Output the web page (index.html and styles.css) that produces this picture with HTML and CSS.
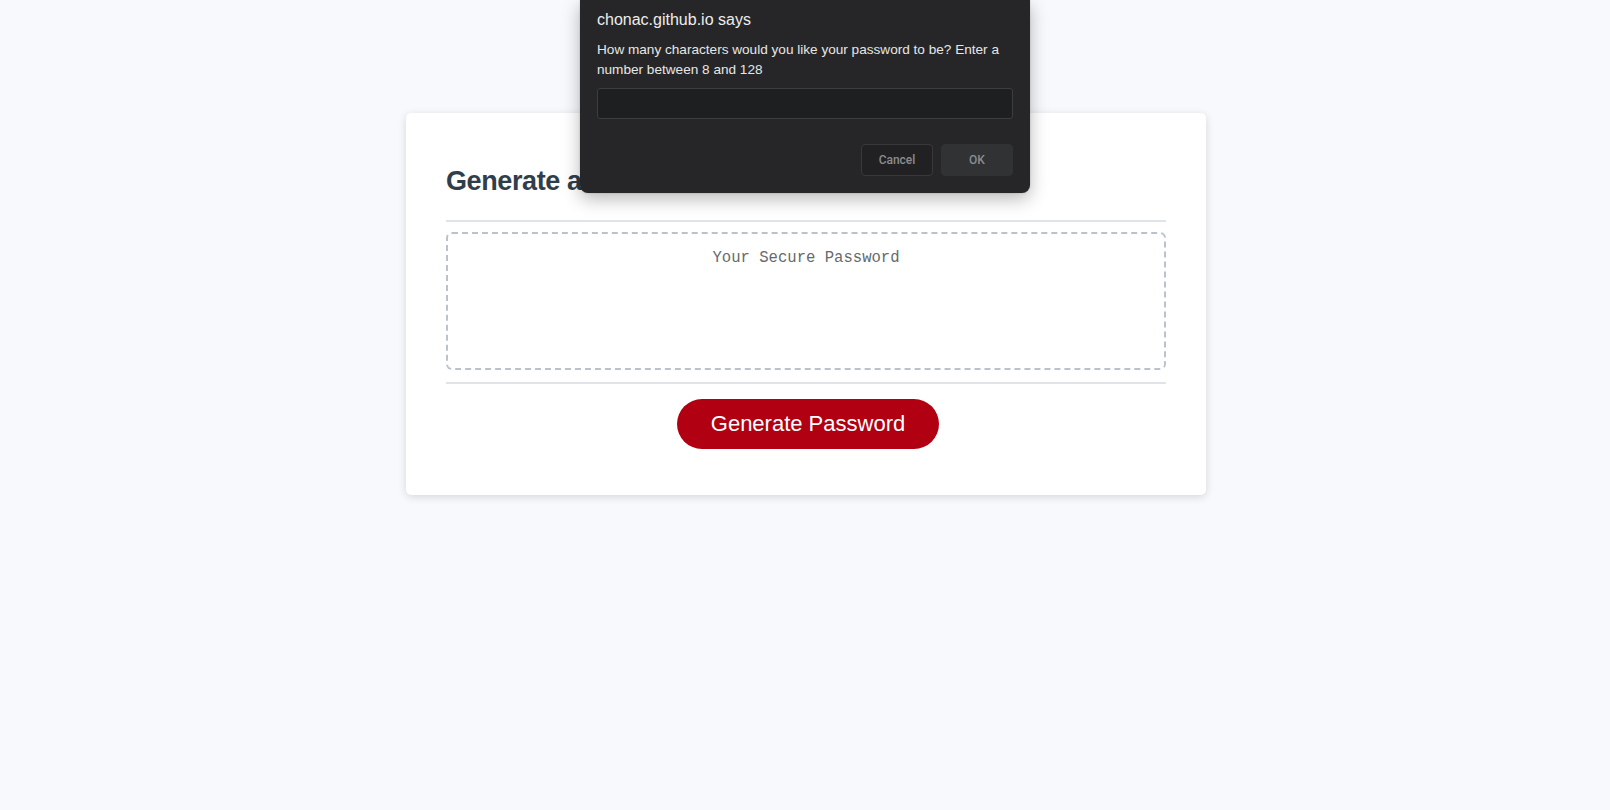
FILE: index.html
```html
<!DOCTYPE html>
<html lang="en">
<head>
<meta charset="UTF-8">
<title>Password Generator</title>
<link rel="stylesheet" href="styles.css">
</head>
<body>
  <div class="wrapper">
    <div class="card">
      <div class="card-header">
        <h2>Generate a Password</h2>
      </div>
      <div class="card-body">
        <textarea readonly placeholder="Your Secure Password" aria-label="Generated Password"></textarea>
      </div>
      <div class="card-footer">
        <button class="btn">Generate Password</button>
      </div>
    </div>
  </div>

  <div class="dialog" role="dialog">
    <div class="dialog-title">chonac.github.io says</div>
    <div class="dialog-msg">How many characters would you like your password to be? Enter a number between 8 and 128</div>
    <div class="dialog-input"></div>
    <div class="dialog-actions">
      <span class="dbtn dbtn-cancel">Cancel</span>
      <span class="dbtn dbtn-ok">OK</span>
    </div>
  </div>
</body>
</html>
```

FILE: styles.css
```css
* { box-sizing: border-box; }

html, body {
  margin: 0;
  height: 100%;
}

body {
  background: #f8f9fc;
  font-family: "Liberation Sans", Arial, sans-serif;
  color: #2f3e4a;
}

.wrapper {
  padding: 113px 19px 0 21px;
}

.card {
  background: #ffffff;
  border-radius: 5px;
  box-shadow: rgba(0, 0, 0, 0.14) 0 2px 8px 0;
  max-width: 800px;
  margin: 0 auto;
  padding: 30px 40px;
}

.card-header::after,
.card-footer::before {
  content: "";
  display: block;
  width: 100%;
  height: 2px;
  background: #e0e3e7;
}

.card-header h2 {
  margin: 22px 0 23px;
  font-size: 27px;
  line-height: 32px;
  font-weight: 700;
  letter-spacing: -0.4px;
  color: #2f3e4a;
}

.card-body {
  padding: 10px 0 12px;
}

.card-body textarea {
  display: block;
  width: 100%;
  height: 138px;
  margin: 0;
  padding: 15px;
  border: 2px dashed #bac3cc;
  border-radius: 6px;
  resize: none;
  overflow: hidden;
  text-align: center;
  font-family: "Liberation Mono", "Courier New", monospace;
  font-size: 15.6px;
  background: #fff;
  outline: none;
}

.card-body textarea::placeholder {
  color: #666a6d;
  opacity: 1;
}

.card-footer {
  text-align: center;
}

.btn {
  border: none;
  background: #b00012;
  border-radius: 25px;
  color: #ffffff;
  display: inline-block;
  font-family: "Liberation Sans", Arial, sans-serif;
  font-size: 22px;
  line-height: 22px;
  margin: 15px 16px 16px 20px;
  padding: 14px 34px;
  cursor: pointer;
}

/* Browser prompt dialog */
.dialog {
  position: absolute;
  top: 0;
  left: 580px;
  width: 450px;
  height: 193px;
  background: #262628;
  border-radius: 0 0 8px 8px;
  box-shadow: 0 6px 18px rgba(0, 0, 0, 0.28), 0 0 2px rgba(0, 0, 0, 0.2);
  padding: 10px 17px 0;
  color: #ececec;
}

.dialog-title {
  font-size: 16px;
  line-height: 20px;
  color: #ededed;
}

.dialog-msg {
  margin-top: 10px;
  font-size: 13.6px;
  line-height: 20px;
  color: #e6e6e6;
}

.dialog-input {
  margin-top: 8px;
  height: 31px;
  background: #1e1f21;
  border: 1px solid #3c3d40;
  border-radius: 3px;
}

.dialog-actions {
  display: flex;
  justify-content: flex-end;
  gap: 8px;
  margin-top: 25px;
}

.dbtn {
  width: 72px;
  height: 32px;
  display: flex;
  align-items: center;
  justify-content: center;
  border-radius: 4px;
  font-family: Roboto, "Liberation Sans", sans-serif;
  font-weight: 500;
  font-size: 12px;
  color: #8b8c8f;
}

.dbtn-cancel {
  background: #212123;
  border: 1px solid #39393c;
}

.dbtn-ok {
  background: #313234;
  border: 1px solid #313234;
}
```
